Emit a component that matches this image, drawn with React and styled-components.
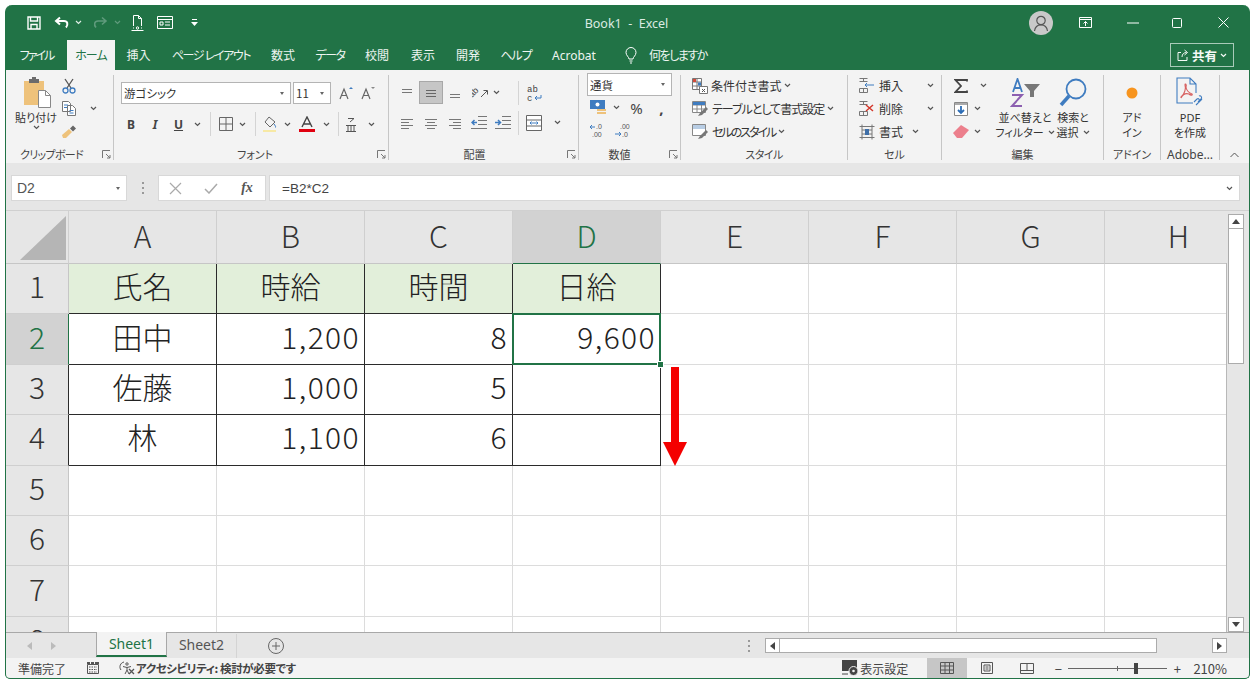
import React from 'react'
import styled, { createGlobalStyle } from 'styled-components'

const UI_FONT = '"Noto Sans", "Noto Sans CJK JP", sans-serif'
const CJK_FONT = '"Noto Sans CJK JP", "Noto Sans", sans-serif'
const GREEN = '#217346'
const INK = '#444'
const BLUE = '#3f7cc0'

const GlobalStyle = createGlobalStyle`
  html, body { margin: 0; padding: 0; background: #fff; }
  body { font-family: ${UI_FONT}; font-feature-settings: "palt"; color: #333; }
  * { box-sizing: border-box; }
  svg { display: block; flex: none; }
`

const Page = styled.div`
  width: 1251px;
  height: 683px;
  padding: 5px 1px 4px 5px;
`
const Window = styled.div`
  height: 100%;
  display: flex;
  flex-direction: column;
  overflow: hidden;
  border: 1px solid ${GREEN};
  border-top: 0;
  border-radius: 7px 7px 5px 5px;
  background: ${GREEN};
`

/* title bar */
const TitleBar = styled.div`
  height: 35px;
  flex: none;
  display: grid;
  grid-template-columns: 1fr auto 1fr;
  align-items: center;
  color: #e4efe9;
`
const QuickAccess = styled.div`
  display: flex;
  align-items: center;
  padding-left: 17px;
`
const Title = styled.div`
  font-size: 12.5px;
  white-space: pre;
  color: #dcebe3;
  padding: 2px 2px 0 0;
`
const WindowControls = styled.div`
  display: flex;
  align-items: center;
  justify-content: flex-end;
  padding-right: 3px;
`
const Avatar = styled.div`
  width: 24px;
  height: 24px;
  border-radius: 50%;
  background: #c9c9c9;
  display: flex;
  align-items: center;
  justify-content: center;
`
const Slot = styled.div`
  width: ${p => p.$w}px;
  height: ${p => p.$h ? p.$h + 'px' : 'auto'};
  flex: none;
  display: flex;
  align-items: center;
  justify-content: center;
  margin-left: ${p => p.$ml || 0}px;
  background: ${p => p.$on ? '#c6c6c6' : 'transparent'};
  border: ${p => p.$on ? '1px solid #a8a8a8' : '0'};
  font-size: ${p => p.$fs || 12}px;
  color: ${p => p.$color || INK};
`

/* tabs */
const TabBar = styled.div`
  height: 30px;
  flex: none;
  display: flex;
  align-items: stretch;
`
const Tab = styled.div`
  width: ${p => p.$w}px;
  flex: none;
  display: flex;
  align-items: center;
  justify-content: center;
  font-size: 12px;
  letter-spacing: ${p => p.$ls || 0}px;
  white-space: nowrap;
  color: ${p => p.$active ? GREEN : '#eef5f1'};
  background: ${p => p.$active ? '#f3f3f3' : 'transparent'};
`
const TellMe = styled.div`
  display: flex;
  align-items: center;
  gap: 12px;
  margin-left: 19px;
  font-size: 12px;
  letter-spacing: -1.5px;
  color: #eef5f1;
`
const ShareButton = styled.div`
  margin: 3px 15px 3px auto;
  width: 64px;
  display: flex;
  align-items: center;
  justify-content: center;
  gap: 3px;
  border: 1px solid #a9cbb9;
  font-size: 12.5px;
  font-weight: 700;
  color: #f4f9f6;
`

/* ribbon */
const Ribbon = styled.div`
  height: 93px;
  flex: none;
  display: flex;
  padding-top: 5px;
  background: #f3f3f3;
`
const Group = styled.div`
  width: ${p => p.$w}px;
  height: 85px;
  flex: none;
  display: flex;
  flex-direction: column;
  border-right: 1px solid #c6c6c6;
`
const GroupBody = styled.div`
  height: 71px;
  flex: none;
  display: flex;
  flex-direction: ${p => p.$col ? 'column' : 'row'};
  padding: ${p => p.$pad || '0'};
  gap: ${p => p.$gap || 0}px;
`
const GroupFooter = styled.div`
  height: 14px;
  display: grid;
  grid-template-columns: 1fr auto 1fr;
  align-items: center;
  font-size: 11px;
  white-space: nowrap;
  color: #444;
`
const Launcher = styled.div`
  justify-self: end;
  padding-right: 2px;
`
const FooterLabel = styled.div`
  grid-column: 2;
  transform: translateX(${p => p.$shift || 0}px);
  letter-spacing: ${p => p.$ls || 0}px;
  font-size: ${p => p.$fs || 11}px;
`
const ToolRow = styled.div`
  display: flex;
  align-items: center;
  height: ${p => p.$h || 22}px;
  padding-left: ${p => p.$pl || 0}px;
  margin-top: ${p => p.$mt || 0}px;
`
const Divider = styled.div`
  width: 1px;
  height: 24px;
  flex: none;
  background: #d4d4d4;
  margin-left: ${p => p.$ml || 0}px;
`
const Select = styled.div`
  width: ${p => p.$w}px;
  height: ${p => p.$h || 22}px;
  flex: none;
  margin-left: ${p => p.$ml || 0}px;
  display: flex;
  align-items: center;
  justify-content: space-between;
  padding: 0 6px 0 2px;
  background: #fff;
  border: 1px solid #b4b4b4;
  font-size: 11.5px;
  font-family: ${CJK_FONT};
  color: #333;
  white-space: nowrap;
`
const Caret = styled.span`
  width: 0;
  height: 0;
  border-left: 2.5px solid transparent;
  border-right: 2.5px solid transparent;
  border-top: 3px solid #666;
`
const TextTool = styled.div`
  display: flex;
  align-items: center;
  height: 23px;
  font-size: 12px;
  white-space: nowrap;
  color: #333;
  gap: ${p => p.$gap || 2}px;
  letter-spacing: ${p => p.$ls || 0}px;
`
const LargeButton = styled.div`
  width: ${p => p.$w}px;
  margin-left: ${p => p.$ml || 0}px;
  flex: none;
  display: flex;
  flex-direction: column;
  align-items: center;
`
const LargeIcon = styled.div`
  height: 35px;
  padding-left: ${p => p.$pl || 0}px;
  display: flex;
  align-items: center;
  justify-content: center;
  flex: none;
`
const LargeLabel = styled.div`
  font-size: 11px;
  line-height: 15px;
  text-align: center;
  white-space: nowrap;
  color: #333;
  display: flex;
  align-items: center;
  justify-content: center;
  gap: 4px;
`
const Stack = styled.div`
  display: flex;
  flex-direction: column;
  width: ${p => p.$w}px;
  flex: none;
  padding-left: ${p => p.$pl || 0}px;
  margin-top: ${p => p.$mt || 0}px;
`
const Collapse = styled.div`
  flex: 1;
  display: flex;
  align-items: flex-end;
  justify-content: center;
  padding: 0 0 2px 0;
  height: 85px;
`

/* formula bar */
const FormulaBar = styled.div`
  height: 48px;
  flex: none;
  display: flex;
  padding: 12px 9px 9px 5px;
  background: #e6e6e6;
  border-bottom: 1px solid #d0d0d0;
`
const NameBox = styled.div`
  width: 116px;
  display: flex;
  align-items: center;
  justify-content: space-between;
  padding: 0 6px 0 5px;
  background: #fff;
  border: 1px solid #d8d8d8;
  font-size: 14px;
  font-family: "Liberation Sans", sans-serif;
  color: #555;
`
const FormulaButtons = styled.div`
  width: 108px;
  flex: none;
  display: flex;
  align-items: center;
  padding-left: 4px;
  background: #fff;
  border: 1px solid #d8d8d8;
`
const FxMark = styled.span`
  font-family: "Liberation Serif", serif;
  font-style: italic;
  font-weight: 700;
  font-size: 14px;
  color: #555;
`
const FormulaInput = styled.div`
  flex: 1;
  margin-left: 3px;
  display: flex;
  align-items: center;
  justify-content: space-between;
  padding: 0 6px 0 12px;
  background: #fff;
  border: 1px solid #d8d8d8;
  font-size: 13.5px;
  font-family: "Liberation Sans", sans-serif;
  color: #444;
`
const GripDots = styled.div`
  width: 2px;
  height: 12px;
  background: repeating-linear-gradient(to bottom, #999 0 2px, transparent 2px 5px);
`

/* sheet */
const SheetArea = styled.div`
  flex: 1;
  min-height: 0;
  display: flex;
  background: #e6e6e6;
`
const GridClip = styled.div`
  width: 1221px;
  flex: none;
  position: relative;
  overflow: hidden;

  /* right edge of the cell area, the last column runs on under the scrollbar */
  &::after {
    content: '';
    position: absolute;
    top: 52px;
    bottom: 0;
    right: 0;
    width: 1px;
    background: #b8b8b8;
  }
`
const Grid = styled.div`
  display: grid;
  grid-template-columns: 63px repeat(8, 148px);
  grid-template-rows: 53px repeat(8, 50.4px);
  background: #fff;
  font-family: ${CJK_FONT};
  font-feature-settings: normal;
  font-size: 30px;
  font-weight: 300;
`
const Corner = styled.div`
  background: #e6e6e6;
  border-right: 1px solid #d0d0d0;
  border-bottom: 1px solid #c6c6c6;
  display: flex;
  align-items: flex-end;
  justify-content: flex-end;
  padding: 0 2px 3px 0;
`
const ColHead = styled.div`
  display: flex;
  align-items: center;
  justify-content: center;
  padding-bottom: 5px;
  color: ${p => p.$sel ? GREEN : '#333'};
  background: ${p => p.$sel ? '#d2d2d2' : '#e6e6e6'};
  border-right: 1px solid #cfcfcf;
  border-bottom: 1px solid ${p => p.$sel ? GREEN : '#c6c6c6'};
`
const RowHead = styled.div`
  display: flex;
  align-items: center;
  justify-content: center;
  padding-bottom: 7px;
  color: ${p => p.$sel ? GREEN : '#333'};
  background: ${p => p.$sel ? '#d2d2d2' : '#e6e6e6'};
  border-right: 1px solid ${p => p.$edge || '#c6c6c6'};
  border-bottom: 1px solid #cfcfcf;
`
const Cell = styled.div`
  position: relative;
  display: flex;
  align-items: center;
  justify-content: ${p => p.$right ? 'flex-end' : 'center'};
  padding-right: ${p => p.$right ? '4px' : '0'};
  padding-bottom: 7px;
  letter-spacing: ${p => p.$right ? '1.4px' : '0'};
  color: #222;
  background: ${p => p.$head ? '#e2efda' : '#fff'};
  border-right: 1px solid ${p => p.$dark ? '#2b2b2b' : '#dcdcdc'};
  border-bottom: 1px solid ${p => p.$dark ? '#2b2b2b' : '#dcdcdc'};
`
const Selection = styled.div`
  position: absolute;
  z-index: 2;
  inset: -1px -1px -1px -1px;
  border: 2px solid ${GREEN};
  pointer-events: none;
`
const FillHandle = styled.div`
  position: absolute;
  right: -5px;
  bottom: -5px;
  width: 7px;
  height: 7px;
  background: ${GREEN};
  border: 1px solid #fff;
`
const ArrowMark = styled.div`
  position: absolute;
  z-index: 3;
  left: 657px;
  top: 156px;
`
const VScroll = styled.div`
  width: 18px;
  flex: none;
  display: flex;
  flex-direction: column;
  padding-top: 3px;
  margin-left: 1px;
`
const ScrollButton = styled.div`
  width: ${p => p.$w || 16}px;
  height: ${p => p.$h || 15}px;
  margin-left: ${p => p.$ml || 0}px;
  flex: none;
  display: flex;
  align-items: center;
  justify-content: center;
  background: #fff;
  border: 1px solid #ababab;
`
const VThumb = styled.div`
  width: 16px;
  height: 135px;
  background: #fff;
  border: 1px solid #ababab;
  border-top: 0;
`
const VSpacer = styled.div`
  flex: 1;
`

/* sheet tabs */
const SheetBar = styled.div`
  height: 26px;
  flex: none;
  display: flex;
  align-items: stretch;
  background: #e6e6e6;
  border-top: 1px solid #a8a8a8;
`
const SheetNav = styled.div`
  width: 90px;
  flex: none;
  display: flex;
  align-items: center;
  padding-left: 21px;
  gap: 19px;
`
const SheetTab = styled.div`
  width: ${p => p.$w}px;
  flex: none;
  display: flex;
  align-items: center;
  justify-content: center;
  font-size: 14px;
  color: ${p => p.$active ? GREEN : '#555'};
  background: ${p => p.$active ? '#f3f3f3' : 'transparent'};
  margin-top: -1px;
  border-left: ${p => p.$active ? '1px solid #a8a8a8' : '0'};
  border-right: ${p => p.$active ? '1px solid #a8a8a8' : '0'};
  border-bottom: ${p => p.$active ? `2px solid ${GREEN}` : '0'};
  height: 25px;
`
const HScroll = styled.div`
  margin-left: auto;
  margin-right: 22px;
  display: flex;
  align-items: center;
`
const HTrack = styled.div`
  width: 432px;
  display: flex;
  height: 15px;
`
const HThumb = styled.div`
  width: 377px;
  height: 15px;
  background: #fff;
  border: 1px solid #ababab;
  border-left: 0;
`

/* status bar */
const StatusBar = styled.div`
  height: 20px;
  flex: none;
  display: flex;
  align-items: stretch;
  padding-left: 12px;
  background: #f3f3f3;
  font-size: 12px;
  color: #444;
  font-family: ${CJK_FONT};
`
const StatusText = styled.div`
  display: flex;
  align-items: center;
  white-space: nowrap;
  font-size: ${p => p.$fs || 12}px;
  letter-spacing: ${p => p.$ls || 0}px;
  font-weight: ${p => p.$bold ? 700 : 400};
  margin-left: ${p => p.$ml || 0}px;
`
const StatusRight = styled.div`
  margin-left: auto;
  display: flex;
  align-items: stretch;
  padding-right: 22px;
`
const ViewButton = styled.div`
  width: 40px;
  margin-left: ${p => p.$ml || 0}px;
  display: flex;
  align-items: center;
  justify-content: center;
  background: ${p => p.$on ? '#c6c6c6' : 'transparent'};
`
const ZoomSlider = styled.div`
  width: 99px;
  height: 1px;
  position: relative;
  background: #666;
  align-self: center;
  margin: 0 5px;
`
const ZoomTick = styled.div`
  position: absolute;
  left: 49px;
  top: -2px;
  width: 1px;
  height: 5px;
  background: #666;
`
const ZoomThumb = styled.div`
  position: absolute;
  left: 66px;
  top: -5px;
  width: 4px;
  height: 11px;
  background: #444;
`

/* icons */
const Chev = ({ color = '#555' }) => (
  <svg width="7" height="5" viewBox="0 0 7 5"><path d="M1 1l2.5 2.5L6 1" fill="none" stroke={color} strokeWidth="1.2" /></svg>
)
const LauncherIcon = () => (
  <svg width="9" height="9" viewBox="0 0 9 9" fill="none" stroke="#777"><path d="M.5 8V.5H8M4 4l4 4M8 5v3H5" /></svg>
)
const Lines = ({ rows, color = '#777' }) => (
  <svg width="14" height="12" viewBox="0 0 14 12" stroke={color} fill="none">
    {rows.map(([y, a, b]) => <path key={y} d={`M${a} ${y}.5H${b}`} />)}
  </svg>
)
const SaveIcon = () => (
  <svg width="14" height="14" viewBox="0 0 14 14" fill="none" stroke="#fff" strokeWidth="1.4"><path d="M1 1h12v12H1zM3.5 1v4h7V1M4 13V8.5h6V13" /></svg>
)
const UndoIcon = ({ color = '#fff' }) => (
  <svg width="16" height="13" viewBox="0 0 16 13" fill="none" stroke={color} strokeWidth="2"><path d="M6 1.5L2 5l4 3.5M2.5 5H10c3.5 0 4.5 3.5 2 6.5" /></svg>
)
const RedoIcon = () => (
  <svg width="16" height="13" viewBox="0 0 16 13" fill="none" stroke="#5f9a7c" strokeWidth="1.6"><path d="M10 1.5L14 5l-4 3.5M13.5 5H6c-3.5 0-4.5 3.5-2 6.5" /></svg>
)
const PreviewIcon = () => (
  <svg width="13" height="16" viewBox="0 0 13 16" fill="none" stroke="#fff"><path d="M2.5 11V.5h5l3 3V11M7.5.5v3h3M.5 15.5h12" /><circle cx="6.5" cy="13" r="1.2" /><path d="M2 13h1M10 13h1" /></svg>
)
const FormIcon = () => (
  <svg width="16" height="13" viewBox="0 0 16 13" fill="none" stroke="#fff"><path d="M.5.5h15v12H.5zM.5 3.5h15M8 6h5M8 9h5M3 6h3v3H3z" /></svg>
)
const CustomizeIcon = () => (
  <svg width="7" height="8" viewBox="0 0 7 8" fill="#fff"><path d="M1 0h5v1H1zM0 3h7L3.5 7z" /></svg>
)
const UserIcon = () => (
  <svg width="18" height="18" viewBox="0 0 18 18" fill="none" stroke="#555" strokeWidth="1.2"><circle cx="9" cy="6.5" r="4.2" /><path d="M2.5 17c.5-4 3-6.2 6.5-6.2s6 2.2 6.500 6.200" /></svg>
)
const DisplayIcon = () => (
  <svg width="13" height="11" viewBox="0 0 13 11" fill="none" stroke="#fff"><path d="M.5.5h12v10H.5zM.5 2.500h12M6.500 9V4.500M4.500 6.500l2-2 2 2" /></svg>
)
const MinIcon = () => <svg width="12" height="2" viewBox="0 0 12 2"><path d="M0 1h12" stroke="#fff" /></svg>
const MaxIcon = () => <svg width="10" height="10" viewBox="0 0 10 10"><rect x=".5" y=".5" width="9" height="9" rx="1" fill="none" stroke="#fff" /></svg>
const CloseIcon = () => <svg width="11" height="11" viewBox="0 0 11 11"><path d="M.5.5l10 10M10.500.5l-10 10" stroke="#fff" /></svg>
const BulbIcon = () => (
  <svg width="12" height="17" viewBox="0 0 12 17" fill="none" stroke="#fff"><path d="M4 12c0-2-3-3.500-3-6.500a5 5 0 0 1 10 0C11 8.500 8 10 8 12zM4.500 14h3M5 16h2" /></svg>
)
const ShareIcon = () => (
  <svg width="12" height="12" viewBox="0 0 12 12" fill="none" stroke="#f4f9f6"><path d="M4 3.500H1v8h9V8M5 8c0-3 2-4.500 4.500-4.500M7.500 1l3 2.500-3 2.500" /></svg>
)
const PasteIcon = () => (
  <svg width="28" height="31" viewBox="0 0 28 31">
    <path d="M0 4h20v24H0z" fill="#eec27b" />
    <path d="M5 2h10v4H5z" fill="#6b6b6b" /><path d="M8 0h4v3H8z" fill="#6b6b6b" />
    <path d="M14.500 13.500h7l5 5v12h-12z" fill="#fff" stroke="#888" />
    <path d="M21.500 13.500v5h5" fill="none" stroke="#888" />
  </svg>
)
const CutIcon = () => (
  <svg width="14" height="16" viewBox="0 0 14 16" fill="none"><path d="M3 1l6 9M11 1L5 10" stroke="#555" strokeWidth="1.3" /><circle cx="3.500" cy="12.500" r="2.500" stroke={BLUE} strokeWidth="1.3" /><circle cx="10.500" cy="12.500" r="2.500" stroke={BLUE} strokeWidth="1.3" /></svg>
)
const CopyIcon = () => (
  <svg width="14" height="15" viewBox="0 0 14 15" fill="#fff" stroke="#777"><path d="M.5.5h6l2 2v8h-8zM5.500 4.500h5l3 3v7h-8z" /><path d="M2 4h4M2 6.500h3M7.500 9.500h4M7.500 12h4" stroke={BLUE} /></svg>
)
const PainterIcon = () => (
  <svg width="16" height="13" viewBox="0 0 16 13"><path d="M1 10l7-6 3 3-6 6H2z" fill="#eec27b" /><path d="M9 3.500l3-3 3 3-3 3z" fill="#666" /></svg>
)
const GrowIcon = ({ up }) => (
  <svg width="14" height="14" viewBox="0 0 14 14" fill="none">
    <path d="M1 13L5 3l4 10M2.500 9.500h5" stroke="#666" strokeWidth="1.2" />
    <path d={up ? 'M10 3l2-2 2 2z' : 'M10 1l2 2 2-2z'} fill={up ? BLUE : '#888'} />
  </svg>
)
const BorderIcon = () => (
  <svg width="14" height="14" viewBox="0 0 14 14" fill="none" stroke="#666"><path d="M.5.5h13v13H.5zM7 .5v13M.5 7h13" /></svg>
)
const FillIcon = () => (
  <svg width="15" height="16" viewBox="0 0 15 16" fill="none"><path d="M6 1l6 5-5 5-5-5z" stroke="#666" /><path d="M11 8c1 1.500 2 2.500 1.500 3.500" stroke={BLUE} /><path d="M0 14h13v2H0z" fill="#f7e9a5" /></svg>
)
const FontColorIcon = () => (
  <svg width="16" height="16" viewBox="0 0 16 16" fill="none"><path d="M3 11L8 1l5 10M4.500 8h7" stroke="#444" strokeWidth="1.400" /><path d="M0 13h16v3H0z" fill="#e0000f" /></svg>
)
const PhoneticIcon = () => (
  <svg width="10" height="15" viewBox="0 0 10 15" fill="none" stroke="#555"><path d="M2 1.500h6L4 5M0 8.500h10M2 8.500v6M8 8.500v6M5 8.500v6M0 14.500h10" /></svg>
)
const OrientIcon = () => (
  <svg width="17" height="15" viewBox="0 0 17 15" fill="none">
    <text x="0" y="13" fontSize="9" fontFamily="Liberation Sans" fill="#444" transform="rotate(-45 0 13)">ab</text>
    <path d="M9 12l6-6M11.500 5.500H15.500V9.500" stroke="#555" />
  </svg>
)
const WrapIcon = () => (
  <svg width="18" height="20" viewBox="0 0 18 20" fill="none">
    <text x="2" y="9" fontSize="9" fontFamily="Liberation Mono" fill="#444">ab</text>
    <text x="2" y="18" fontSize="9" fontFamily="Liberation Mono" fill="#444">c</text>
    <path d="M16 12v3h-6M12 13l-2 2 2 2" stroke={BLUE} />
  </svg>
)
const IndentIcon = ({ flip }) => (
  <svg width="16" height="13" viewBox="0 0 16 13" fill="none">
    <path d="M7 .5h9M7 4.500h9M7 8.500h9M0 12.500h16" stroke="#777" />
    <path d={flip ? 'M0 6.500h5M3 4l2.500 2.500L3 9' : 'M6 6.500H1M3.500 4L1 6.500 3.500 9'} stroke={BLUE} strokeWidth="1.500" />
  </svg>
)
const MergeIcon = () => (
  <svg width="16" height="16" viewBox="0 0 16 16" fill="#fff" stroke="#666"><path d="M.5.500h15v15H.5zM.5 5h15M.5 11h15" /><path d="M4 8h8M5.500 6.500L4 8l1.500 1.500M10.500 6.500L12 8l-1.500 1.500" stroke={BLUE} fill="none" /></svg>
)
const AccountIcon = () => (
  <svg width="17" height="16" viewBox="0 0 17 16"><path d="M0 0h15v9H0z" fill={BLUE} /><circle cx="7.500" cy="4.500" r="2" fill="#fff" /><path d="M7 9h9v2H7zM7 12h9v2H7z" fill="#eec27b" /></svg>
)
const DecimalIcon = ({ more }) => (
  <svg width="16" height="15" viewBox="0 0 16 15" fill="none">
    <text x="6" y="6" fontSize="7" fontFamily="Liberation Sans" fill="#555">{more ? '.00' : '.0'}</text>
    <text x="2" y="14" fontSize="7" fontFamily="Liberation Sans" fill="#555">{more ? '' : '.00'}</text>
    {more ? <text x="8" y="14" fontSize="7" fontFamily="Liberation Sans" fill="#555">.0</text> : null}
    <path d={more ? 'M1 11h6M5 9l2 2-2 2' : 'M0 4h5M2 2L0 4l2 2'} stroke={BLUE} />
  </svg>
)
const CondIcon = () => (
  <svg width="16" height="16" viewBox="0 0 16 16" fill="#fff" stroke="#777"><path d="M.5.500h9v11h-9zM5 .5v11M.5 4h9M.5 8h9" /><path d="M1 1h3v3H1z" fill="#d34a3a" stroke="none" /><path d="M6 4.500h3v3H6z" fill={BLUE} stroke="none" /><path d="M7.500 8.500h8v7h-8z" /><path d="M10 11l3 3M13 11l-3 3" stroke="#555" /></svg>
)
const TableIcon = () => (
  <svg width="17" height="16" viewBox="0 0 17 16" fill="#fff" stroke="#888"><path d="M.5.500h13v11H.5z" /><path d="M.5 4h13M5 .5v11M9.500.5v11M.5 8h13" /><path d="M1 1h12v3H1z" fill={BLUE} stroke="none" /><path d="M6 15l2-3 6-6 2 2-6 6z" fill="#777" stroke="none" /></svg>
)
const CellStyleIcon = () => (
  <svg width="17" height="16" viewBox="0 0 17 16" fill="#fff" stroke="#888"><path d="M.5.500h13v11H.5z" /><path d="M1 1h12v4H1z" fill="#b8cde4" stroke="none" /><path d="M6 15l2-3 6-6 2 2-6 6z" fill="#777" stroke="none" /></svg>
)
const InsertIcon = () => (
  <svg width="16" height="15" viewBox="0 0 16 15" fill="none" stroke="#777"><path d="M.5.500h8M.5 3.500h8M4.500.5v3M.5 10.500h8v4h-8zM4.500 10.500v4" /><path d="M6 7h9M8 5L6 7l2 2" stroke={BLUE} /></svg>
)
const DeleteIcon = () => (
  <svg width="16" height="15" viewBox="0 0 16 15" fill="none" stroke="#777"><path d="M.5.500h8M.5 3.500h8M4.500.5v3M.5 10.500h8v4h-8zM4.500 10.500v4" /><path d="M7 4l7 6M14 4l-7 6" stroke="#d4382c" strokeWidth="1.500" /></svg>
)
const FormatIcon = () => (
  <svg width="16" height="16" viewBox="0 0 16 16" fill="none" stroke="#777"><path d="M.5 2.500h15M.5 13.500h15M3 .5v15M13 .5v15M3 6h10M3 10h10" /><path d="M6 5h4v6H6z" fill="#3f6fa8" stroke="none" /></svg>
)
const SigmaIcon = () => (
  <svg width="14" height="14" viewBox="0 0 14 14" fill="none" stroke="#444" strokeWidth="1.800"><path d="M13 2.500V1H1.500L7 7l-5.500 6H13v-1.500" /></svg>
)
const FillDownIcon = () => (
  <svg width="14" height="14" viewBox="0 0 14 14"><path d="M.5.500h13v13H.5z" fill="#fff" stroke="#888" /><path d="M1 1h12v2H1z" fill="#aaa" /><path d="M7 4v7M4 8l3 3 3-3" fill="none" stroke="#2b6cb5" strokeWidth="1.800" /></svg>
)
const EraserIcon = () => (
  <svg width="16" height="13" viewBox="0 0 16 13"><path d="M0 8l8-8 8 5-7 8H4z" fill="#ec7f8c" /></svg>
)
const SortIcon = () => (
  <svg width="31" height="30" viewBox="0 0 31 30">
    <path d="M3 14L7.500 1 12 14M4.500 10h6" fill="none" stroke="#3f7cc0" strokeWidth="1.800" />
    <path d="M2 17h10L2 28h10" fill="none" stroke="#8c5fb0" strokeWidth="2" />
    <path d="M14 6h16l-6 7v6h-4v-6z" fill="#777" />
  </svg>
)
const FindIcon = () => (
  <svg width="28" height="30" viewBox="0 0 28 30" fill="none"><circle cx="17" cy="11" r="9.500" stroke="#3f7cc0" strokeWidth="1.800" /><path d="M10 18L2 27" stroke="#3f7cc0" strokeWidth="3.500" /></svg>
)
const AddinIcon = () => (
  <svg width="12" height="12" viewBox="0 0 12 12"><circle cx="6" cy="6" r="5.500" fill="#f7941e" /></svg>
)
const PdfIcon = () => (
  <svg width="30" height="32" viewBox="0 0 30 32" fill="none" stroke="#3f7cc0" strokeWidth="1.100">
    <path d="M18 26H2V1h13l6 6v9M15 1v6h6" />
    <path d="M6 20c4-3 5-9 4-12 0-2 2-1 1 2 0 3 3 6 6 7 1 1-1 2-3 0-3-1-6 0-8 4z" stroke="#d76060" />
    <path d="M21 28l6-6M19 25l3-3c1.500-1 3 .5 2 2M23 25l3-3c1.500-1 0-4-2-3" />
  </svg>
)
const CollapseIcon = () => (
  <svg width="9" height="6" viewBox="0 0 9 6"><path d="M.5 5l4-4 4 4" fill="none" stroke="#555" /></svg>
)
const CrossTool = () => (
  <svg width="13" height="13" viewBox="0 0 13 13"><path d="M1 1l11 11M12 1L1 12" stroke="#aaa" strokeWidth="1.200" /></svg>
)
const CheckTool = () => (
  <svg width="14" height="11" viewBox="0 0 14 11"><path d="M1 6l4 4 8-9" stroke="#aaa" strokeWidth="1.500" fill="none" /></svg>
)
const CornerTriangle = () => (
  <svg width="46" height="44" viewBox="0 0 46 44"><path d="M46 0v44H0z" fill="#b5b5b5" /></svg>
)
const TriIcon = ({ dir, color = '#444' }) => {
  const d = { up: 'M0 5L4 0l4 5z', down: 'M0 0l4 5 4-5z', left: 'M5 0v8L0 4z', right: 'M0 0v8l5-4z' }[dir]
  const box = dir === 'up' || dir === 'down' ? [8, 5] : [5, 8]
  return <svg width={box[0]} height={box[1]} viewBox={`0 0 ${box[0]} ${box[1]}`}><path d={d} fill={color} /></svg>
}
const PlusCircle = () => (
  <svg width="16" height="16" viewBox="0 0 16 16" fill="none" stroke="#666"><circle cx="8" cy="8" r="7.500" /><path d="M4 8h8M8 4v8" /></svg>
)
const MacroIcon = () => (
  <svg width="12" height="12" viewBox="0 0 12 12" fill="none" stroke="#555"><path d="M.5 2.500h11v9H.5z" /><path d="M0 0h3v2H0zM4 0h3v2H4zM8 0h4v2H8z" fill="#555" stroke="none" /><path d="M2 5h8M2 7.500h8M2 10h8" strokeDasharray="1.500 1" /></svg>
)
const AccessIcon = () => (
  <svg width="16" height="14" viewBox="0 0 16 14" fill="none" stroke="#555"><path d="M5 1a5 5 0 0 0-3 8" /><circle cx="8" cy="3" r="1.200" /><path d="M4 5.500l4 1 4-1M8 6.500V9M6 13l2-4 2 4" /><path d="M10 8l5 5M15 8l-5 5" strokeWidth="1.300" /></svg>
)
const DisplaySetIcon = () => (
  <svg width="18" height="16" viewBox="0 0 18 16"><path d="M0 0h15v11H0z" fill="#444" /><circle cx="11.500" cy="11" r="4.500" fill="#444" stroke="#f3f3f3" /><circle cx="11.500" cy="11" r="1.300" fill="#f3f3f3" /><path d="M0 14h6" stroke="#444" /></svg>
)
const NormalView = () => (
  <svg width="14" height="12" viewBox="0 0 14 12" fill="none" stroke="#555"><path d="M.5.500h13v11H.5zM.5 4h13M.5 8h13M5 .5v11M9.500.5v11" /></svg>
)
const PageView = () => (
  <svg width="12" height="12" viewBox="0 0 12 12" fill="none" stroke="#555"><path d="M.5.500h11v11H.5zM3 3h6v6H3zM4.500 5h3M4.500 7h3" /></svg>
)
const BreakView = () => (
  <svg width="14" height="11" viewBox="0 0 14 11" fill="none" stroke="#555"><path d="M.5.500h13v10H.5zM.5 7.500h13M7 .5v7" /></svg>
)
const RedArrow = () => (
  <svg width="24" height="100" viewBox="0 0 24 100"><path d="M8 0h8v75h8L12 99 0 75h8z" fill="#f40000" /></svg>
)

const COLS = ['A', 'B', 'C', 'D', 'E', 'F', 'G', 'H']
const DATA = [
  [{ t: '氏名' }, { t: '時給' }, { t: '時間' }, { t: '日給' }],
  [{ t: '田中' }, { t: '1,200', r: true }, { t: '8', r: true }, { t: '9,600', r: true }],
  [{ t: '佐藤' }, { t: '1,000', r: true }, { t: '5', r: true }, { t: '' }],
  [{ t: '林' }, { t: '1,100', r: true }, { t: '6', r: true }, { t: '' }],
]
const ROWS = [1, 2, 3, 4, 5, 6, 7, 8]

function Footer({ label, launcher, shift, ls, fs }) {
  return (
    <GroupFooter>
      <FooterLabel $shift={shift} $ls={ls} $fs={fs}>{label}</FooterLabel>
      {launcher && <Launcher><LauncherIcon /></Launcher>}
    </GroupFooter>
  )
}

function Sheet() {
  return (
    <GridClip>
      <Grid>
        <Corner><CornerTriangle /></Corner>
        {COLS.map(c => <ColHead key={c} $sel={c === 'D'}>{c}</ColHead>)}
        {ROWS.map((r, ri) => (
          <React.Fragment key={r}>
            <RowHead $sel={r === 2} $edge={r === 2 ? GREEN : r === 3 || r === 4 ? '#2b2b2b' : undefined}>{r}</RowHead>
            {COLS.map((c, ci) => {
              const d = DATA[ri] && DATA[ri][ci]
              return (
                <Cell key={c} $head={r === 1 && !!d} $dark={!!d} $right={d && d.r}>
                  {d ? d.t : ''}
                  {r === 2 && c === 'D' && <Selection><FillHandle /></Selection>}
                </Cell>
              )
            })}
          </React.Fragment>
        ))}
      </Grid>
      <ArrowMark><RedArrow /></ArrowMark>
    </GridClip>
  )
}

export default function App() {
  return (
    <Page>
      <GlobalStyle />
      <Window>
        <TitleBar>
          <QuickAccess>
            <Slot $w={22}><SaveIcon /></Slot>
            <Slot $w={22} $ml={6}><UndoIcon /></Slot>
            <Slot $w={10}><Chev color="#dfeee6" /></Slot>
            <Slot $w={24} $ml={5}><RedoIcon /></Slot>
            <Slot $w={10}><Chev color="#5f9a7c" /></Slot>
            <Slot $w={22} $ml={4}><PreviewIcon /></Slot>
            <Slot $w={22} $ml={6}><FormIcon /></Slot>
            <Slot $w={12} $ml={12}><CustomizeIcon /></Slot>
          </QuickAccess>
          <Title>Book1  -  Excel</Title>
          <WindowControls>
            <Avatar><UserIcon /></Avatar>
            <Slot $w={44} $ml={10}><DisplayIcon /></Slot>
            <Slot $w={42} $ml={5}><MinIcon /></Slot>
            <Slot $w={46}><MaxIcon /></Slot>
            <Slot $w={46}><CloseIcon /></Slot>
          </WindowControls>
        </TitleBar>

        <TabBar>
          <Tab $w={61} $ls={-2}>ファイル</Tab>
          <Tab $w={48} $ls={-1} $active>ホーム</Tab>
          <Tab $w={47}>挿入</Tab>
          <Tab $w={98} $ls={-1.4}>ページ レイアウト</Tab>
          <Tab $w={46}>数式</Tab>
          <Tab $w={48} $ls={-1.5}>データ</Tab>
          <Tab $w={46}>校閲</Tab>
          <Tab $w={46}>表示</Tab>
          <Tab $w={44}>開発</Tab>
          <Tab $w={52} $ls={-1}>ヘルプ</Tab>
          <Tab $w={64}>Acrobat</Tab>
          <TellMe><BulbIcon />何をしますか</TellMe>
          <ShareButton><ShareIcon />共有<Chev color="#f4f9f6" /></ShareButton>
        </TabBar>

        <Ribbon>
          <Group $w={108}>
            <GroupBody>
              <LargeButton $w={46} $ml={7}>
                <LargeIcon $pl={4}><PasteIcon /></LargeIcon>
                <LargeLabel>貼り付け</LargeLabel>
                <LargeLabel><Chev /></LargeLabel>
              </LargeButton>
              <Stack $w={20} $mt={-1}>
                <Slot $w={20} $h={23}><CutIcon /></Slot>
                <Slot $w={20} $h={23}><CopyIcon /></Slot>
                <Slot $w={20} $h={23}><PainterIcon /></Slot>
              </Stack>
              <Stack $w={28} $mt={-1}>
                <Slot $w={28} $h={23} />
                <Slot $w={28} $h={23}><Chev /></Slot>
              </Stack>
            </GroupBody>
            <Footer label="クリップボード" launcher shift={-8} ls={-0.7} />
          </Group>

          <Group $w={275}>
            <GroupBody $col $pad="7px 0 0 0" $gap={9}>
              <ToolRow $pl={7}>
                <Select $w={170}>游ゴシック<Caret /></Select>
                <Select $w={38} $ml={2}>11<Caret /></Select>
                <Slot $w={22} $ml={4}><GrowIcon up /></Slot>
                <Slot $w={22}><GrowIcon /></Slot>
              </ToolRow>
              <ToolRow $pl={5}>
                <Slot $w={24}><b>B</b></Slot>
                <Slot $w={24}><b><i>I</i></b></Slot>
                <Slot $w={23}><b><u>U</u></b></Slot>
                <Slot $w={14}><Chev /></Slot>
                <Divider $ml={6} />
                <Slot $w={19} $ml={5}><BorderIcon /></Slot>
                <Slot $w={15}><Chev /></Slot>
                <Divider $ml={5} />
                <Slot $w={20} $ml={4}><FillIcon /></Slot>
                <Slot $w={15}><Chev /></Slot>
                <Slot $w={24}><FontColorIcon /></Slot>
                <Slot $w={14}><Chev /></Slot>
                <Divider $ml={5} />
                <Slot $w={16} $ml={4}><PhoneticIcon /></Slot>
                <Slot $w={24}><Chev /></Slot>
              </ToolRow>
            </GroupBody>
            <Footer label="フォント" launcher shift={4} />
          </Group>

          <Group $w={190}>
            <GroupBody $col $pad="6px 0 0 6px" $gap={7}>
              <ToolRow $h={23}>
                <Slot $w={24}><Lines rows={[[2, 2, 12], [5, 2, 12]]} /></Slot>
                <Slot $w={24} $h={23} $on><Lines color="#666" rows={[[3, 2, 12], [6, 2, 12], [9, 2, 12]]} /></Slot>
                <Slot $w={24}><Lines rows={[[7, 2, 12], [10, 2, 12]]} /></Slot>
                <Slot $w={24} $ml={1}><OrientIcon /></Slot>
                <Slot $w={8}><Chev /></Slot>
                <Divider $ml={18} />
                <Slot $w={30}><WrapIcon /></Slot>
              </ToolRow>
              <ToolRow $h={23}>
                <Slot $w={24}><Lines rows={[[2, 1, 13], [5, 1, 9], [8, 1, 13], [11, 1, 9]]} /></Slot>
                <Slot $w={24}><Lines rows={[[2, 1, 13], [5, 3, 11], [8, 1, 13], [11, 3, 11]]} /></Slot>
                <Slot $w={24}><Lines rows={[[2, 1, 13], [5, 5, 13], [8, 1, 13], [11, 5, 13]]} /></Slot>
                <Slot $w={24}><IndentIcon /></Slot>
                <Slot $w={24}><IndentIcon flip /></Slot>
                <Divider $ml={3} />
                <Slot $w={30}><MergeIcon /></Slot>
                <Slot $w={16}><Chev /></Slot>
              </ToolRow>
            </GroupBody>
            <Footer label="配置" launcher shift={-9} />
          </Group>

          <Group $w={102}>
            <GroupBody $col $pad="0 0 0 8px">
              <ToolRow $h={23} $mt={-2}>
                <Select $w={85} $h={23}>通貨<Caret /></Select>
              </ToolRow>
              <ToolRow $h={23}>
                <Slot $w={22}><AccountIcon /></Slot>
                <Slot $w={14}><Chev /></Slot>
                <Slot $w={23} $ml={2} $fs={15}>%</Slot>
                <Slot $w={23} $ml={2} $fs={15}><b>,</b></Slot>
              </ToolRow>
              <ToolRow $h={23}>
                <Slot $w={22}><DecimalIcon /></Slot>
                <Slot $w={23} $ml={1}><DecimalIcon more /></Slot>
              </ToolRow>
            </GroupBody>
            <Footer label="数値" launcher shift={-10} />
          </Group>

          <Group $w={167}>
            <GroupBody $col $pad="0 0 0 10px">
              <Stack $w={156} $mt={-1}>
                <TextTool><Slot $w={18}><CondIcon /></Slot>条件付き書式<Chev /></TextTool>
                <TextTool $ls={-1} $gap={3}><Slot $w={18}><TableIcon /></Slot>テーブルとして書式設定<Chev /></TextTool>
                <TextTool $ls={-2} $gap={3}><Slot $w={18}><CellStyleIcon /></Slot>セルのスタイル<Chev /></TextTool>
              </Stack>
            </GroupBody>
            <Footer label="スタイル" ls={-0.5} />
          </Group>

          <Group $w={94}>
            <GroupBody $col $pad="0 0 0 10px">
              <Stack $w={80} $mt={-1}>
                <TextTool $gap={3}><Slot $w={18}><InsertIcon /></Slot>挿入<Slot $w={7} $ml={21}><Chev /></Slot></TextTool>
                <TextTool $gap={3}><Slot $w={18}><DeleteIcon /></Slot>削除<Slot $w={7} $ml={21}><Chev /></Slot></TextTool>
                <TextTool $gap={3}><Slot $w={18}><FormatIcon /></Slot>書式<Slot $w={7} $ml={6}><Chev /></Slot></TextTool>
              </Stack>
            </GroupBody>
            <Footer label="セル" />
          </Group>

          <Group $w={162}>
            <GroupBody>
              <Stack $w={56} $pl={11} $mt={-1}>
                <ToolRow $h={23}><Slot $w={16}><SigmaIcon /></Slot><Slot $w={7} $ml={11}><Chev /></Slot></ToolRow>
                <ToolRow $h={23}><Slot $w={16}><FillDownIcon /></Slot><Slot $w={7} $ml={5}><Chev /></Slot></ToolRow>
                <ToolRow $h={23}><Slot $w={16}><EraserIcon /></Slot><Slot $w={7} $ml={5}><Chev /></Slot></ToolRow>
              </Stack>
              <LargeButton $w={54}>
                <LargeIcon><SortIcon /></LargeIcon>
                <LargeLabel>並べ替えと</LargeLabel>
                <LargeLabel>フィルター<Chev /></LargeLabel>
              </LargeButton>
              <LargeButton $w={42}>
                <LargeIcon><FindIcon /></LargeIcon>
                <LargeLabel>検索と</LargeLabel>
                <LargeLabel>選択<Chev /></LargeLabel>
              </LargeButton>
            </GroupBody>
            <Footer label="編集" />
          </Group>

          <Group $w={57}>
            <GroupBody>
              <LargeButton $w={56}>
                <LargeIcon><AddinIcon /></LargeIcon>
                <LargeLabel>アド</LargeLabel>
                <LargeLabel>イン</LargeLabel>
              </LargeButton>
            </GroupBody>
            <Footer label="アドイン" />
          </Group>

          <Group $w={59}>
            <GroupBody>
              <LargeButton $w={58}>
                <LargeIcon><PdfIcon /></LargeIcon>
                <LargeLabel>PDF</LargeLabel>
                <LargeLabel>を作成</LargeLabel>
              </LargeButton>
            </GroupBody>
            <Footer label="Adobe…" fs={12} />
          </Group>

          <Collapse><CollapseIcon /></Collapse>
        </Ribbon>

        <FormulaBar>
          <NameBox>D2<Caret /></NameBox>
          <Slot $w={31}><GripDots /></Slot>
          <FormulaButtons>
            <Slot $w={24}><CrossTool /></Slot>
            <Slot $w={36} $ml={6}><CheckTool /></Slot>
            <Slot $w={36}><FxMark>fx</FxMark></Slot>
          </FormulaButtons>
          <FormulaInput>=B2*C2<Chev /></FormulaInput>
        </FormulaBar>

        <SheetArea>
          <Sheet />
          <VScroll>
            <ScrollButton><TriIcon dir="up" /></ScrollButton>
            <VThumb />
            <VSpacer />
            <ScrollButton><TriIcon dir="down" /></ScrollButton>
          </VScroll>
        </SheetArea>

        <SheetBar>
          <SheetNav><TriIcon dir="left" color="#bbb" /><TriIcon dir="right" color="#bbb" /></SheetNav>
          <SheetTab $w={71} $active>Sheet1</SheetTab>
          <SheetTab $w={69}>Sheet2</SheetTab>
          <Slot $w={1}><Divider /></Slot>
          <Slot $w={16} $ml={31}><PlusCircle /></Slot>
          <HScroll>
            <Slot $w={16}><GripDots /></Slot>
            <ScrollButton $w={15} $h={15} $ml={8}><TriIcon dir="left" /></ScrollButton>
            <HTrack><HThumb /></HTrack>
            <ScrollButton $w={15} $h={15}><TriIcon dir="right" /></ScrollButton>
          </HScroll>
        </SheetBar>

        <StatusBar>
          <StatusText>準備完了</StatusText>
          <StatusText $ml={21}><MacroIcon /></StatusText>
          <StatusText $ml={20}><AccessIcon /></StatusText>
          <StatusText $ml={1} $bold $fs={11.5} $ls={-0.4}>アクセシビリティ: 検討が必要です</StatusText>
          <StatusRight>
            <StatusText><DisplaySetIcon />表示設定</StatusText>
            <ViewButton $on $ml={19}><NormalView /></ViewButton>
            <ViewButton><PageView /></ViewButton>
            <ViewButton><BreakView /></ViewButton>
            <Slot $w={10} $ml={6} $fs={13}>−</Slot>
            <ZoomSlider><ZoomTick /><ZoomThumb /></ZoomSlider>
            <Slot $w={10} $fs={13}>+</Slot>
            <StatusText $ml={11} $fs={13}>210%</StatusText>
          </StatusRight>
        </StatusBar>
      </Window>
    </Page>
  )
}
